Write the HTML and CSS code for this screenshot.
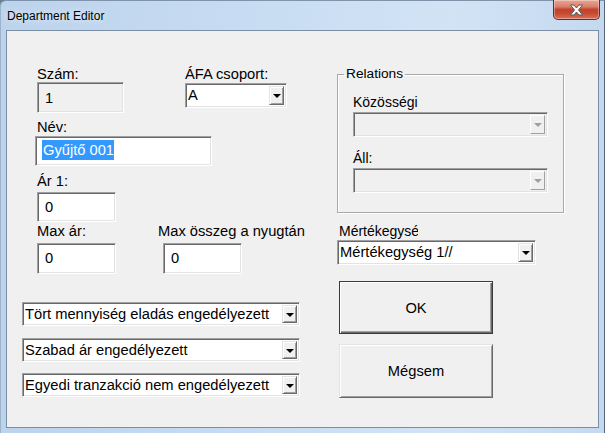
FILE: index.html
```html
<!DOCTYPE html>
<html lang="hu">
<head>
    <meta charset="UTF-8">
    <title>Department Editor</title>
    <link rel="stylesheet" href="styles.css">
</head>
<body>
    <div class="window">
        <!-- Címsor -->
        <div class="titlebar">
            <div class="title">Department Editor</div>
            <div class="close-btn">
                <svg width="15" height="12" viewBox="0 0 15 12">
                    <path d="M1.5 1 H5 L7.5 4 L10 1 H13.5 L9.5 6 L13.5 11 H10 L7.5 8 L5 11 H1.5 L5.5 6 Z"
                          fill="#fff" stroke="#5b5b5b" stroke-width="1" stroke-linejoin="round"/>
                </svg>
            </div>
        </div>

        <!-- Ügyfélterület -->
        <div class="client">
            <div class="col-left">
                <div class="row">
                    <div class="field">
                        <div class="label">Szám:</div>
                        <div class="edit readonly num-box">1</div>
                    </div>
                    <div class="field afa-field">
                        <div class="label">ÁFA csoport:</div>
                        <div class="combo afa-combo">
                            <span class="combo-text">A</span>
                            <span class="drop"><i class="arrow"></i></span>
                        </div>
                    </div>
                </div>

                <div class="label name-label">Név:</div>
                <div class="edit name-box"><span class="selected">Gyűjtő 001</span></div>

                <div class="label price-label">Ár 1:</div>
                <div class="edit small-box price-box">0</div>

                <div class="row max-row">
                    <div class="field">
                        <div class="label">Max ár:</div>
                        <div class="edit small-box max-box">0</div>
                    </div>
                    <div class="field sum-field">
                        <div class="label nowrap">Max összeg a nyugtán</div>
                        <div class="edit small-box max-box sum-box">0</div>
                    </div>
                </div>

                <div class="combo wide-combo first">
                    <span class="combo-text">Tört mennyiség eladás engedélyezett</span>
                    <span class="drop"><i class="arrow"></i></span>
                </div>
                <div class="combo wide-combo second">
                    <span class="combo-text">Szabad ár engedélyezett</span>
                    <span class="drop"><i class="arrow"></i></span>
                </div>
                <div class="combo wide-combo third">
                    <span class="combo-text">Egyedi tranzakció nem engedélyezett</span>
                    <span class="drop"><i class="arrow"></i></span>
                </div>
            </div>

            <div class="col-right">
                <fieldset class="group">
                    <legend>Relations</legend>
                    <div class="group-body">
                        <div class="label group-label">Közösségi</div>
                        <div class="combo disabled group-combo">
                            <span class="combo-text"></span>
                            <span class="drop"><i class="arrow"></i></span>
                        </div>
                        <div class="label group-label second-label">Áll:</div>
                        <div class="combo disabled group-combo">
                            <span class="combo-text"></span>
                            <span class="drop"><i class="arrow"></i></span>
                        </div>
                    </div>
                </fieldset>

                <div class="label unit-label">Mértékegység</div>
                <div class="combo unit-combo">
                    <span class="combo-text">Mértékegység 1//</span>
                    <span class="drop"><i class="arrow"></i></span>
                </div>

                <button class="btn default-btn">OK</button>
                <button class="btn cancel-btn">Mégsem</button>
            </div>
        </div>
    </div>
</body>
</html>
```

FILE: styles.css
```css
:root {
    --face: #f0f0f0;
    --shadow: #a0a0a0;
    --dark-shadow: #696969;
    --light: #e3e3e3;
    --highlight: #ffffff;
    --select-bg: #3399ff;
    --frame: #c2d8f0;
}

html, body {
    margin: 0;
    padding: 0;
    background: #6b7f95;
}

body {
    font-family: 'Liberation Sans', Arial, sans-serif;
    font-size: 14.7px;
    color: #000;
}

/* Ablakkeret */
.window {
    width: 605px;
    height: 433px;
    box-sizing: border-box;
    padding: 0 5px 5px 5px;
    display: flex;
    flex-direction: column;
    background: linear-gradient(to right, #bcd3ec 0%, #c7dcf2 40%, #d2e3f5 75%, #c4d9f0 100%);
    border-top: 1px solid #7f93aa;
    border-left: 1px solid #9db3cc;
    border-right: 1px solid #55667a;
    border-top-left-radius: 6px;
}

.titlebar {
    height: 29px;
    display: flex;
    justify-content: space-between;
    align-items: flex-start;
    margin-left: -1px;
    margin-right: -1px;
}

.title {
    padding: 8px 0 0 2px;
    font-size: 12px;
    line-height: 14px;
    color: #000;
    text-shadow: 0 0 6px rgba(255, 255, 255, 0.9);
}

.close-btn {
    width: 45px;
    height: 19px;
    margin-top: -1px;
    display: flex;
    align-items: center;
    justify-content: center;
    border: 1px solid #6e2a20;
    border-top: none;
    border-radius: 0 0 5px 5px;
    background: linear-gradient(to bottom, #e8a595 0%, #d9806c 35%, #c2432b 50%, #c7492f 70%, #db715a 100%);
    box-shadow: inset 0 0 0 1px rgba(255, 255, 255, 0.35);
}

/* Kliens terület */
.client {
    flex: 1;
    display: flex;
    padding-left: 15px;
    background: var(--face);
    border: 1px solid #7c8ea3;
}

.col-left {
    width: 278px;
    padding-top: 35px;
}

.col-right {
    width: 227px;
    margin-left: 37px;
    display: flex;
    flex-direction: column;
    align-items: flex-start;
}

.row {
    display: flex;
    align-items: flex-start;
    margin-left: 15px;
}

.label {
    line-height: 16px;
    height: 16px;
}

.nowrap {
    white-space: nowrap;
}

/* Szerkesztőmezők */
.edit {
    box-sizing: border-box;
    background: #fff;
    border: 1px solid;
    border-color: var(--shadow) var(--highlight) var(--highlight) var(--shadow);
    box-shadow: inset 1px 1px var(--dark-shadow), inset -1px -1px var(--light);
    padding: 6px 0 0 7px;
    line-height: 16px;
    white-space: nowrap;
}

.readonly {
    background: var(--face);
}

.num-box {
    width: 87px;
    height: 31px;
    padding-top: 7px;
}

.afa-field {
    margin-left: 61px;
}

.afa-combo {
    width: 102px;
    height: 25px;
    margin-top: 1px;
}

.name-label {
    margin: 6px 0 0 15px;
}

.name-box {
    width: 177px;
    height: 30px;
    margin: 1px 0 0 13px;
    padding: 5px 0 0 6px;
}

.selected {
    background: var(--select-bg);
    color: #fff;
    padding: 2px 0 2px 1px;
}

.price-label {
    margin: 7px 0 0 15px;
}

.small-box {
    width: 79px;
    height: 30px;
}

.price-box {
    margin: 3px 0 0 15px;
}

.max-row {
    margin-top: 1px;
}

.max-box {
    height: 31px;
    margin-top: 4px;
}

.sum-field {
    margin-left: 42px;
}

.sum-box {
    margin-left: 5px;
}

/* Legördülő listák */
.combo {
    box-sizing: border-box;
    display: flex;
    align-items: stretch;
    background: #fff;
    border: 1px solid;
    border-color: var(--shadow) var(--highlight) var(--highlight) var(--shadow);
    box-shadow: inset 1px 1px var(--dark-shadow), inset -1px -1px var(--light);
    padding: 2px;
}

.combo-text {
    flex: 1;
    line-height: 19px;
    padding-left: 0;
    white-space: nowrap;
    overflow: hidden;
}

.drop {
    width: 15px;
    box-sizing: border-box;
    background: var(--face);
    border: 1px solid;
    border-color: var(--light) var(--dark-shadow) var(--dark-shadow) var(--light);
    box-shadow: inset 1px 1px var(--highlight), inset -1px -1px var(--shadow);
    display: flex;
    align-items: center;
    justify-content: center;
}

.arrow {
    width: 0;
    height: 0;
    border-left: 4px solid transparent;
    border-right: 4px solid transparent;
    border-top: 4px solid #000;
    margin-top: 1px;
}

.wide-combo {
    width: 278px;
    height: 24px;
}

.wide-combo .combo-text {
    line-height: 18px;
}

.wide-combo.first {
    margin-top: 28px;
}

.wide-combo.second {
    margin-top: 12px;
}

.wide-combo.third {
    margin-top: 11px;
}

.combo.disabled {
    background: var(--face);
}

.combo.disabled .drop {
    border-color: var(--highlight) var(--shadow) var(--shadow) var(--highlight);
    box-shadow: none;
}

.combo.disabled .arrow {
    border-top-color: var(--shadow);
}

/* Csoportdoboz */
.group {
    box-sizing: border-box;
    width: 227px;
    min-width: 0;
    margin: 35px 0 0 0;
    padding: 0 0 19px 0;
    border: 1px solid #a9a9a9;
    box-shadow: 1px 1px 0 #fff, inset 1px 1px 0 #fff;
}

.group legend {
    font-size: 13.7px;
    line-height: 16px;
    padding: 0 2px;
    margin-left: 6px;
}

.group-body {
    padding-left: 15px;
}

.group-label {
    margin-top: 12px;
    font-size: 14px;
}

.group-label.second-label {
    margin-top: 13px;
}

.group-combo {
    width: 195px;
    height: 25px;
    margin-top: 2px;
}

.unit-label {
    width: 79px;
    margin: 10px 0 0 2px;
    overflow: hidden;
    white-space: nowrap;
    font-size: 14px;
}

.unit-combo {
    width: 199px;
    height: 25px;
    margin-top: 1px;
}

/* Gombok */
.btn {
    font-family: inherit;
    font-size: 14.7px;
    color: #000;
    background: var(--face);
    width: 154px;
    margin-left: 2px;
    padding: 0;
    cursor: pointer;
}

.default-btn {
    height: 53px;
    margin-top: 16px;
    border: 1px solid #3a3a3a;
    box-shadow: inset 1px 1px var(--highlight), inset -1px -1px var(--dark-shadow), inset -2px -2px var(--shadow);
}

.cancel-btn {
    height: 54px;
    margin-top: 10px;
    border: 1px solid;
    border-color: var(--light) var(--dark-shadow) var(--dark-shadow) var(--light);
    box-shadow: inset 1px 1px var(--highlight), inset -1px -1px var(--shadow);
}
```
